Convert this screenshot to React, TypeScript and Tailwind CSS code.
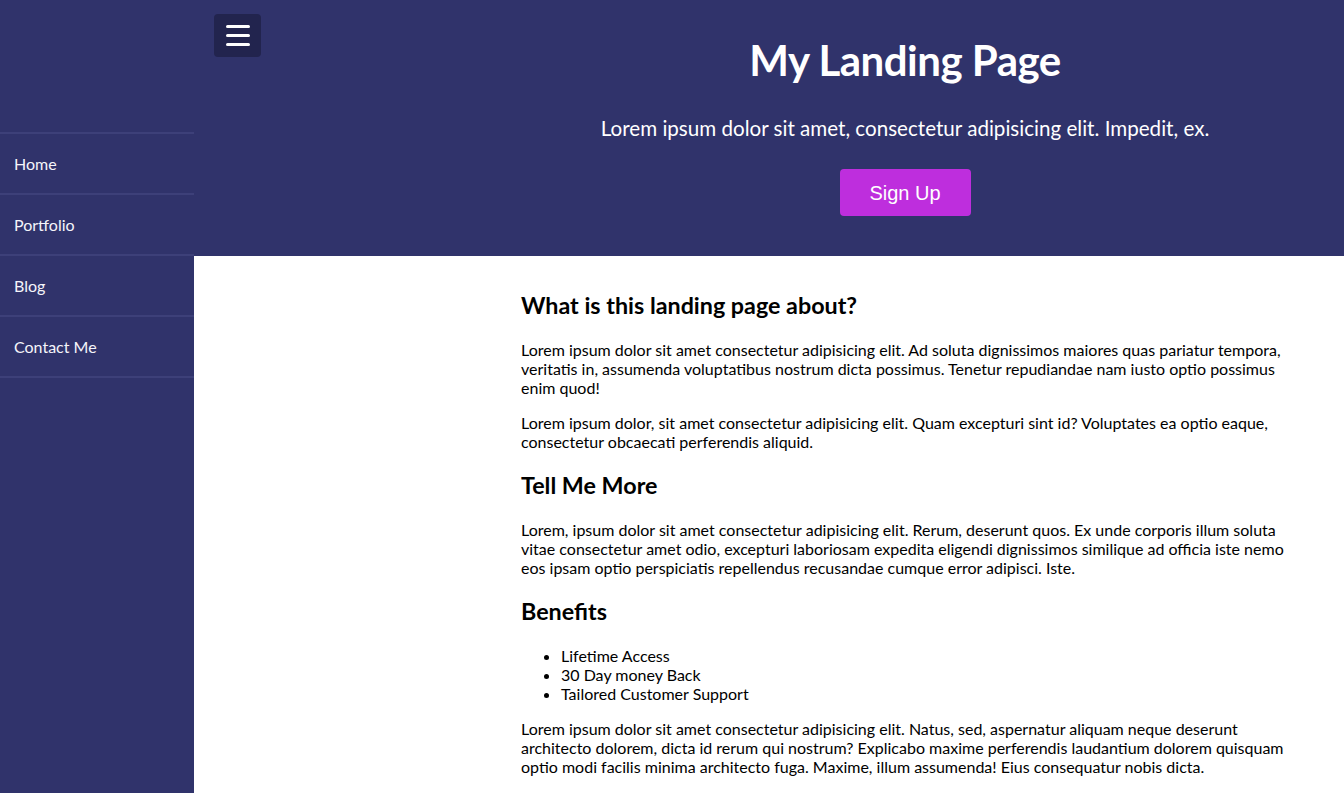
export default function App() {
  const links = ["Home", "Portfolio", "Blog", "Contact Me"];

  return (
    <div className="flex min-h-screen font-['Lato','Noto_Sans',sans-serif] leading-[1.2] text-black">
      {/* Sidebar */}
      <aside className="w-[194px] shrink-0 bg-[#30336b]">
        <nav className="mt-[132px] border-t-2 border-[#3d4079]">
          <ul>
            {links.map((l) => (
              <li key={l} className="border-b-2 border-[#3d4079]">
                <a href="#" className="flex h-[59px] items-center px-[14px] text-base text-[#f5f5fa]">
                  {l}
                </a>
              </li>
            ))}
          </ul>
        </nav>
      </aside>

      <div className="flex flex-1 flex-col">
        {/* Header */}
        <header className="flex h-[256px] items-start bg-[#30336b]">
          <button className="ml-[20px] mt-[14px] flex h-[43px] w-[47px] flex-col items-center justify-center gap-[6px] rounded-[4px] bg-[#22244e]">
            <span className="block h-[3px] w-[24px] rounded-full bg-white" />
            <span className="block h-[3px] w-[24px] rounded-full bg-white" />
            <span className="block h-[3px] w-[24px] rounded-full bg-white" />
          </button>
          <div className="ml-[205px] flex flex-1 flex-col items-center text-white">
            <h1 className="mt-[35px] text-[42px] font-bold leading-[50px] tracking-[-0.5px]">My Landing Page</h1>
            <p className="mt-[31px] text-[20.6px] leading-[24px]">
              Lorem ipsum dolor sit amet, consectetur adipisicing elit. Impedit, ex.
            </p>
            <button className="mt-[29px] h-[47px] w-[131px] rounded-[4px] bg-[#be2edd] font-['Liberation_Sans',Arial,sans-serif] text-[20px] text-white">
              Sign Up
            </button>
          </div>
        </header>

        {/* Content */}
        <main className="ml-[272px] pb-4 pl-[55px] pr-[52px] pt-[15px] text-base leading-[19px]">
          <h2 className="my-[20px] text-[23.3px] font-bold leading-[29px]">What is this landing page about?</h2>
          <p className="my-4">
            Lorem ipsum dolor sit amet consectetur adipisicing elit. Ad soluta dignissimos maiores quas pariatur tempora,
            veritatis in, assumenda voluptatibus nostrum dicta possimus. Tenetur repudiandae nam iusto optio possimus enim
            quod!
          </p>
          <p className="my-4">
            Lorem ipsum dolor, sit amet consectetur adipisicing elit. Quam excepturi sint id? Voluptates ea optio eaque,
            consectetur obcaecati perferendis aliquid.
          </p>
          <h2 className="my-[20px] text-[23.3px] font-bold leading-[29px]">Tell Me More</h2>
          <p className="my-4">
            Lorem, ipsum dolor sit amet consectetur adipisicing elit. Rerum, deserunt quos. Ex unde corporis illum soluta
            vitae consectetur amet odio, excepturi laboriosam expedita eligendi dignissimos similique ad officia iste nemo
            eos ipsam optio perspiciatis repellendus recusandae cumque error adipisci. Iste.
          </p>
          <h2 className="my-[20px] text-[23.3px] font-bold leading-[29px]">Benefits</h2>
          <ul className="my-4 list-disc pl-10">
            <li>Lifetime Access</li>
            <li>30 Day money Back</li>
            <li>Tailored Customer Support</li>
          </ul>
          <p className="my-4">
            Lorem ipsum dolor sit amet consectetur adipisicing elit. Natus, sed, aspernatur aliquam neque deserunt
            architecto dolorem, dicta id rerum qui nostrum? Explicabo maxime perferendis laudantium dolorem quisquam optio
            modi facilis minima architecto fuga. Maxime, illum assumenda! Eius consequatur nobis dicta.
          </p>
        </main>
      </div>
    </div>
  );
}
